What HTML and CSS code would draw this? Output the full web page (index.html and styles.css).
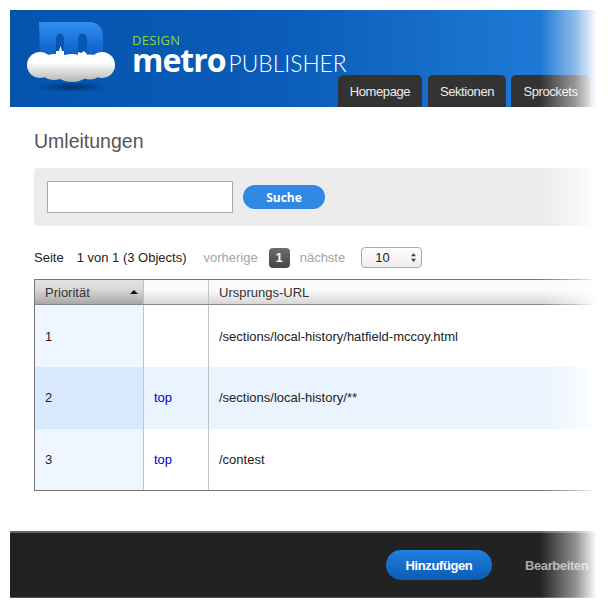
FILE: index.html
```html
<!DOCTYPE html>
<html lang="de">
<head>
<meta charset="utf-8">
<title>Umleitungen</title>
<link rel="stylesheet" href="styles.css">
</head>
<body>
<div class="page">
  <header class="masthead">
    <svg class="logo" viewBox="0 0 100 76" width="100" height="76" aria-hidden="true">
      <defs>
        <linearGradient id="mg" x1="0" y1="0" x2="0" y2="1">
          <stop offset="0" stop-color="#2f8ff0"/>
          <stop offset="1" stop-color="#0a58c0"/>
        </linearGradient>
        <linearGradient id="cg" gradientUnits="userSpaceOnUse" x1="0" y1="36" x2="0" y2="62">
          <stop offset="0.25" stop-color="#ffffff"/>
          <stop offset="1" stop-color="#b4b4b4"/>
        </linearGradient>
        <radialGradient id="sg">
          <stop offset="0" stop-color="#01265f" stop-opacity=".85"/>
          <stop offset="1" stop-color="#01306f" stop-opacity="0"/>
        </radialGradient>
      </defs>
      <ellipse cx="44" cy="67" rx="38" ry="5" fill="url(#sg)"/>
      <path d="M12 2H62C71 2 76 8 76 16V39H60V19C60 12 51 12 51 19V39H37V19C37 12 29 12 29 19V39H13Z" fill="url(#mg)"/>
      <g fill="url(#cg)">
        <path d="M29 36V31L32 31L33.500 26L35 31L37 31V40H29ZM51 38V32L54 33L57 31L60 34V40H51Z"/>
        <ellipse cx="13" cy="45" rx="13" ry="13"/>
        <ellipse cx="27" cy="47" rx="15" ry="13"/>
        <ellipse cx="45" cy="48" rx="19" ry="14"/>
        <ellipse cx="63" cy="47" rx="14" ry="12.500"/>
        <ellipse cx="75" cy="45" rx="13" ry="13"/>
        <path d="M20 35H68V50H20Z"/>
      </g>
    </svg>
    <div class="brand">
      <div class="brand-top">DESIGN</div>
      <div class="brand-name"><span class="brand-metro">metro</span><span class="brand-pub">PUBLISHER</span></div>
    </div>
    <nav class="tabs">
      <a class="tab tab-home">Homepage</a>
      <a class="tab tab-sek">Sektionen</a>
      <a class="tab tab-spr">Sprockets</a>
    </nav>
  </header>

  <main class="content">
    <h1 class="title">Umleitungen</h1>
    <form class="search">
      <input class="search-input" type="text">
      <button class="search-btn" type="button">Suche</button>
    </form>
    <div class="pager">
      <span class="pager-label">Seite</span>
      <span class="pager-count">1 von 1 (3 Objects)</span>
      <span class="pager-link pager-prev">vorherige</span>
      <span class="pager-num">1</span>
      <span class="pager-link pager-next">nächste</span>
      <span class="pager-select">10
        <svg class="updown" viewBox="0 0 7 11" width="7" height="11" aria-hidden="true"><path d="M3.500 1 6 4.300H1ZM3.500 10 1 6.700H6Z" fill="#444"/></svg>
      </span>
    </div>
    <div class="table">
      <div class="row head">
        <div class="cell c1 sorted">Priorität<i class="caret"></i></div>
        <div class="cell c2"></div>
        <div class="cell c3">Ursprungs-URL</div>
      </div>
      <div class="row">
        <div class="cell c1">1</div>
        <div class="cell c2"></div>
        <div class="cell c3">/sections/local-history/hatfield-mccoy.html</div>
      </div>
      <div class="row alt">
        <div class="cell c1">2</div>
        <div class="cell c2"><a class="top">top</a></div>
        <div class="cell c3">/sections/local-history/**</div>
      </div>
      <div class="row">
        <div class="cell c1">3</div>
        <div class="cell c2"><a class="top">top</a></div>
        <div class="cell c3">/contest</div>
      </div>
    </div>
  </main>

  <footer class="actions">
    <button class="add-btn" type="button">Hinzufügen</button>
    <span class="edit">Bearbeiten</span>
  </footer>

  <div class="fade"></div>
</div>
</body>
</html>
```

FILE: styles.css
```css
* { box-sizing: border-box; }
html, body { margin: 0; padding: 0; background: #fff; }
body { font-family: "Liberation Sans", Arial, sans-serif; color: #222; }
.page { position: relative; width: 611px; height: 608px; overflow: hidden; padding-top: 10px; }

.masthead {
  display: flex;
  height: 97px;
  margin-left: 10px;
  width: 601px;
  background: linear-gradient(90deg, #0454ae 0, #0a5cb8 45%, #1c78d4 85%);
}
.logo { flex: none; margin: 10px 0 0 17px; }
.brand { flex: none; width: 206px; margin-left: 5px; padding-top: 22px; white-space: nowrap; }
.brand-top { font-family: "Open Sans", sans-serif; font-size: 13px; line-height: 16px; color: #8fd63c; letter-spacing: .3px; }
.brand-name { display: flex; align-items: baseline; height: 24px; line-height: 23px; color: #fff; }
.brand-metro { font-family: "Open Sans", sans-serif; font-weight: 700; font-size: 32px; letter-spacing: -1px; }
.brand-pub { font-family: "Lato", sans-serif; font-weight: 300; font-size: 22.800px; margin-left: 3px; }

.tabs { display: flex; align-self: flex-end; flex: none; height: 32px; }
.tab {
  display: flex; align-items: center; justify-content: center;
  height: 32px; background: #333; color: #eee;
  border-radius: 5px 5px 0 0;
  font-size: 13px; letter-spacing: -.4px;
}
.tab-home { width: 84px; }
.tab-sek { width: 78px; margin-left: 6px; }
.tab-spr { width: 79px; margin-left: 5px; }

.content { padding: 0 0 0 34px; }
.title { margin: 23px 0 0; font-size: 19.500px; line-height: 23px; font-weight: 400; color: #555; }
.search {
  display: flex; align-items: center; gap: 10px;
  width: 577px; height: 58px; margin-top: 15px; padding-left: 13px;
  background: #ececec; border-radius: 4px 0 0 4px;
}
.search-input { width: 186px; height: 32px; margin: 0; background: #fff; border: 1px solid #aaa; border-radius: 0; }
.search-btn {
  width: 82px; height: 24px; padding: 0; border: 0; border-radius: 12px;
  background: #2f89e4; color: #fff;
  font-family: "Open Sans", sans-serif; font-weight: 700; font-size: 12px;
}

.pager { display: flex; align-items: center; height: 21px; margin-top: 21px; font-size: 13px; }
.pager-count { margin-left: 13px; }
.pager-link { color: #a3a3a3; }
.pager-prev { margin-left: 17px; }
.pager-num {
  width: 21px; height: 20px; margin-left: 11px; border-radius: 4px;
  background: linear-gradient(#6e6e6e, #444); color: #fff; font-weight: 700;
  text-align: center; line-height: 20px;
}
.pager-next { margin-left: 10px; }
.pager-select {
  display: flex; align-items: center; justify-content: space-between;
  width: 61px; height: 21px; margin-left: 16px; padding: 0 4px 0 13px;
  border: 1px solid #aaa; border-radius: 4px;
  background: linear-gradient(#fff, #ececec);
}

.table { width: 577px; margin-top: 11px; border: 1px solid #777; }
.row { display: flex; height: 62px; }
.row.head { height: 25px; border-bottom: 1px solid #888; }
.row:last-child { height: 61px; }
.cell { display: flex; align-items: center; font-size: 13px; }
.c1 { width: 109px; padding-left: 10px; background: #eef6ff; border-right: 1px solid #c4c4c4; }
.c2 { width: 65px; padding-left: 10px; border-right: 1px solid #c4c4c4; }
.c3 { flex: 1; padding-left: 10px; }
.head .cell { background: linear-gradient(#f8f8f8 0, #fcfcfc 40%, #d6d6d6 100%); color: #333; }
.head .sorted { background: linear-gradient(#e2e2e2 0, #d8d8d8 40%, #a8a8a8 100%); justify-content: space-between; padding-right: 5px; }
.caret { width: 0; height: 0; border: 4px solid transparent; border-top: 0; border-bottom: 4px solid #111; }
.alt .cell { padding-bottom: 2px; }
.alt .c1 { background: #d8e9fd; }
.alt .c2, .alt .c3 { background: #eaf4fe; }
.top { color: #0000c8; }

.actions {
  display: flex; align-items: center;
  width: 601px; height: 67px; margin: 40px 0 0 10px; padding-left: 376px;
  background: #222; border-top: 2px solid #666; border-bottom: 1px solid #555;
}
.add-btn {
  width: 106px; height: 30px; padding: 0; border: 0; border-radius: 15px;
  background: linear-gradient(#1f7fdc, #0b5cb4); color: #fff;
  font-family: "Liberation Sans", sans-serif; font-weight: 700; font-size: 13px; letter-spacing: -.4px;
}
.edit { margin-left: 33px; font-size: 13px; font-weight: 700; color: #aaa; white-space: nowrap; letter-spacing: -.4px; }

.fade {
  position: absolute; top: 0; bottom: 0; left: 540px; width: 71px;
  background: linear-gradient(90deg, rgba(255,255,255,0) 0, rgba(255,255,255,.5) 50%, #fff 80%);
  pointer-events: none;
}
```
